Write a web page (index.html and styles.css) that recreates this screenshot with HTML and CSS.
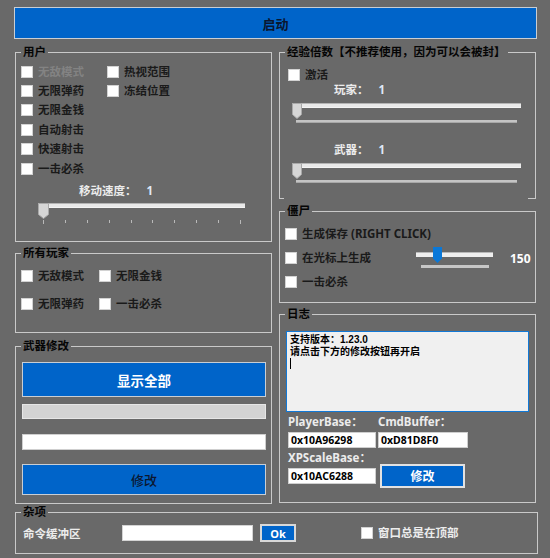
FILE: index.html
```html
<!DOCTYPE html>
<html lang="zh">
<head>
<meta charset="utf-8">
<title>Trainer</title>
<link rel="stylesheet" href="styles.css">
</head>
<body>
<div class="app">
  <button class="btn start">启动</button>

  <div class="columns">
    <div class="col">
      <section class="group g-user">
        <h3 class="gtitle">用户</h3>
        <div class="checks user-checks">
          <label class="cb disabled"><span class="box"></span>无敌模式</label>
          <label class="cb"><span class="box"></span>无限弹药</label>
          <label class="cb"><span class="box"></span>无限金钱</label>
          <label class="cb"><span class="box"></span>自动射击</label>
          <label class="cb"><span class="box"></span>快速射击</label>
          <label class="cb"><span class="box"></span>一击必杀</label>
          <label class="cb"><span class="box"></span>热视范围</label>
          <label class="cb"><span class="box"></span>冻结位置</label>
        </div>
        <div class="vlabel speed-label">移动速度：<span class="val">1</span></div>
        <div class="slider speed-slider">
          <div class="track"></div>
          <svg class="thumb" width="11" height="16" viewBox="0 0 11 16"><path d="M0.5 0.5H10.5V11.5L5.5 15.5L0.5 11.5Z" fill="#d6d6d6" stroke="#a9a9a9"/></svg>
        </div>
        <div class="ticks">
          <i class="tick long"></i><i class="tick"></i><i class="tick"></i><i class="tick"></i><i class="tick"></i><i class="tick"></i><i class="tick"></i><i class="tick"></i><i class="tick"></i><i class="tick long"></i>
        </div>
      </section>

      <section class="group g-all">
        <h3 class="gtitle">所有玩家</h3>
        <div class="checks all-checks">
          <label class="cb"><span class="box"></span>无敌模式</label>
          <label class="cb"><span class="box"></span>无限金钱</label>
          <label class="cb"><span class="box"></span>无限弹药</label>
          <label class="cb"><span class="box"></span>一击必杀</label>
        </div>
      </section>

      <section class="group g-weapon">
        <h3 class="gtitle">武器修改</h3>
        <button class="btn showall">显示全部</button>
        <div class="graybox"></div>
        <div class="whitebox"></div>
        <button class="btn modify-dark">修改</button>
      </section>
    </div>

    <div class="col">
      <section class="group g-exp">
        <h3 class="gtitle">经验倍数【不推荐使用，因为可以会被封】</h3>
        <label class="cb activate"><span class="box"></span>激活</label>
        <div class="vlabel exp-label first">玩家：<span class="val">1</span></div>
        <div class="slider exp-slider">
          <div class="track"></div>
          <svg class="thumb" width="10" height="16" viewBox="0 0 10 16"><path d="M0.5 0.5H9.5V11.5L5 15.5L0.5 11.5Z" fill="#d6d6d6" stroke="#a9a9a9"/></svg>
        </div>
        <div class="tickline"></div>
        <div class="vlabel exp-label second">武器：<span class="val">1</span></div>
        <div class="slider exp-slider">
          <div class="track"></div>
          <svg class="thumb" width="10" height="16" viewBox="0 0 10 16"><path d="M0.5 0.5H9.5V11.5L5 15.5L0.5 11.5Z" fill="#d6d6d6" stroke="#a9a9a9"/></svg>
        </div>
        <div class="tickline"></div>
      </section>

      <section class="group g-zombie">
        <h3 class="gtitle">僵尸</h3>
        <div class="zrow"><label class="cb"><span class="box"></span>生成保存 (RIGHT CLICK)</label></div>
        <div class="zrow">
          <label class="cb zcb"><span class="box"></span>在光标上生成</label>
          <div class="zslider">
            <div class="ztrack"></div>
            <svg class="zthumb" width="9" height="16" viewBox="0 0 9 16"><path d="M0 0H9V11.5L4.5 16L0 11.5Z" fill="#0a78d8"/></svg>
            <div class="zline"></div>
          </div>
          <span class="zval">150</span>
        </div>
        <div class="zrow"><label class="cb"><span class="box"></span>一击必杀</label></div>
      </section>

      <section class="group g-log">
        <h3 class="gtitle">日志</h3>
        <div class="logbox">
          <p>支持版本：1.23.0</p>
          <p>请点击下方的修改按钮再开启</p>
          <span class="caret"></span>
        </div>
        <div class="fields">
          <span class="flabel">PlayerBase：</span>
          <span class="flabel">CmdBuffer：</span>
          <span class="input">0x10A96298</span>
          <span class="input">0xD81D8F0</span>
          <span class="flabel">XPScaleBase：</span>
          <span></span>
          <span class="input">0x10AC6288</span>
          <button class="btn modify-log">修改</button>
        </div>
      </section>
    </div>
  </div>

  <section class="group g-misc">
    <h3 class="gtitle">杂项</h3>
    <span class="mlabel">命令缓冲区</span>
    <span class="minput"></span>
    <button class="btn ok">Ok</button>
    <label class="cb mcb"><span class="box"></span>窗口总是在顶部</label>
  </section>
</div>
</body>
</html>
```

FILE: styles.css
```css
* {
  box-sizing: border-box;
  margin: 0;
  padding: 0;
}

body {
  width: 550px;
  height: 558px;
  overflow: hidden;
  background: #696969;
  font-family: "Noto Sans", "Noto Sans CJK SC", sans-serif;
  font-size: 11.5px;
  font-weight: 700;
  color: #1a1a1a;
}

.app {
  padding: 7px 0 0 14px;
}

.btn {
  display: flex;
  align-items: center;
  justify-content: center;
  background: #0064c9;
  border: 1px solid #c9ced4;
  font-family: inherit;
  font-weight: 700;
  cursor: default;
}

.start {
  width: 523px;
  height: 32px;
  font-size: 13px;
  color: #0a1630;
}

.columns {
  display: grid;
  grid-template-columns: 257px 257px;
  column-gap: 7px;
  margin: 13px 0 0 1px;
  align-items: start;
}

.col {
  display: flex;
  flex-direction: column;
}

.group {
  position: relative;
  border: 1px solid #c9c9c9;
}

.gtitle {
  position: absolute;
  top: -8px;
  left: 5px;
  padding: 0 2px;
  background: #696969;
  font-size: 11.5px;
  line-height: 14px;
  font-weight: 700;
  color: #050505;
  white-space: nowrap;
}

/* checkbox */
.cb {
  display: flex;
  align-items: center;
  gap: 5px;
  white-space: nowrap;
  line-height: 14px;
}

.box {
  flex: none;
  width: 12px;
  height: 12px;
  background: #fff;
  border: 1px solid #d2d2d2;
}

.cb.disabled {
  color: #838383;
}

.checks {
  display: grid;
}

/* user group */
.g-user {
  height: 190px;
  padding: 9px 0 0 5px;
}

.user-checks {
  grid-template-columns: 86px auto;
  grid-template-rows: repeat(6, 19.4px);
  grid-auto-flow: column;
}

.vlabel {
  height: 14px;
  line-height: 14px;
  color: #ececec;
  white-space: nowrap;
}

.val {
  color: #dfe8f6;
  margin-left: 10px;
}

.speed-label {
  margin-top: 6px;
  padding-left: 58px;
}

.slider {
  position: relative;
  height: 16px;
}

.track {
  margin-top: 4px;
  height: 5px;
  background: #e9e9e9;
  border-top: 1px solid #b5b5b5;
  border-bottom: 1px solid #f4f4f4;
}

.thumb {
  position: absolute;
  left: 0;
  top: 0;
  display: block;
}

.speed-slider {
  margin: 5px 0 0 17px;
  width: 207px;
}

.ticks {
  display: flex;
  justify-content: space-between;
  align-items: flex-start;
  width: 198px;
  margin: 1px 0 0 22px;
}

.tick {
  display: block;
  width: 1px;
  height: 3px;
  background: #b9b9b9;
}

.tick.long {
  height: 4px;
}

/* all players */
.g-all {
  height: 80px;
  margin-top: 11px;
  padding: 8px 0 0 5px;
}

.all-checks {
  grid-template-columns: 78px auto;
  grid-auto-rows: 28px;
}

/* weapon group */
.g-weapon {
  height: 158px;
  margin-top: 13px;
  padding: 15px 0 0 6px;
}

.showall {
  width: 244px;
  height: 35px;
  font-size: 13.5px;
  color: #ffffff;
}

.graybox {
  width: 244px;
  height: 15px;
  margin-top: 7px;
  background: #d3d3d3;
  border: 1px solid #e6e6e6;
}

.whitebox {
  width: 244px;
  height: 16px;
  margin-top: 15px;
  background: #ffffff;
  border: 1px solid #cfcfcf;
}

.modify-dark {
  width: 244px;
  height: 31px;
  margin-top: 14px;
  font-size: 13px;
  font-weight: 500;
  color: #0b1730;
}

/* exp group */
.g-exp {
  height: 147px;
  padding: 15px 0 0 8px;
}

.g-exp::after {
  content: "";
  position: absolute;
  left: 4px;
  right: 7px;
  bottom: -1px;
  height: 1px;
  background: #696969;
}

.exp-label {
  padding-left: 46px;
}

.exp-label.first {
  margin-top: 1px;
}

.exp-label.second {
  margin-top: 20px;
}

.exp-slider {
  width: 229px;
  margin: 6px 0 0 4px;
}

.tickline {
  width: 221px;
  height: 3px;
  margin: 1px 0 0 8px;
  background: #c4c4c4;
  border-bottom: 1px solid #a8a8a8;
}

/* zombie group */
.g-zombie {
  height: 92px;
  margin-top: 12px;
  padding: 10px 0 0 5px;
}

.zrow {
  display: flex;
  align-items: center;
  height: 24px;
}

.zcb {
  width: 131px;
}

.zslider {
  position: relative;
  width: 77px;
  height: 20px;
  margin-top: -2px;
}

.ztrack {
  position: absolute;
  left: 0;
  right: 0;
  top: 5px;
  height: 5px;
  background: #eeeeee;
  border-top: 1px solid #b8b8b8;
}

.zthumb {
  position: absolute;
  left: 17px;
  top: 0;
  display: block;
}

.zline {
  position: absolute;
  left: 5px;
  width: 68px;
  top: 18px;
  height: 3px;
  background: #c6c6c6;
}

.zval {
  margin-left: 17px;
  color: #ffffff;
  font-size: 12px;
}

/* log group */
.g-log {
  height: 189px;
  margin-top: 11px;
  padding: 16px 0 0 6px;
}

.logbox {
  width: 243px;
  height: 81px;
  padding: 2px 3px;
  background: #f0f0f0;
  border: 1px solid #1178d6;
  font-family: "Liberation Sans", "Noto Sans CJK SC", sans-serif;
  font-size: 10px;
  line-height: 12px;
  color: #000;
}

.caret {
  display: block;
  width: 1px;
  height: 11px;
  background: #000;
}

.fields {
  display: grid;
  grid-template-columns: 88px 90px;
  grid-template-rows: 14px 16px 14px 16px;
  column-gap: 2px;
  row-gap: 3px;
  margin: 3px 0 0 2px;
}

.flabel {
  line-height: 14px;
  color: #ececec;
  white-space: nowrap;
}

.input {
  height: 16px;
  line-height: 14px;
  padding-left: 2px;
  background: #ffffff;
  border: 1px solid #cfcfcf;
  font-size: 10.5px;
  color: #000;
  white-space: nowrap;
}

.modify-log {
  width: 85px;
  height: 24px;
  margin: -4px 0 0 2px;
  border: 2px solid #e2e2e2;
  font-size: 12px;
  color: #ffffff;
}

/* misc group */
.g-misc {
  display: flex;
  align-items: center;
  width: 523px;
  height: 42px;
  margin: 8px 0 0 1px;
  padding-left: 7px;
}

.mlabel {
  width: 99px;
  color: #ececec;
}

.minput {
  width: 131px;
  height: 16px;
  background: #ffffff;
  border: 1px solid #d4d4d4;
}

.ok {
  width: 36px;
  height: 18px;
  margin-left: 7px;
  border: 2px solid #d8d8d8;
  font-size: 11px;
  color: #ffffff;
}

.mcb {
  margin-left: 65px;
  color: #ececec;
}
```
